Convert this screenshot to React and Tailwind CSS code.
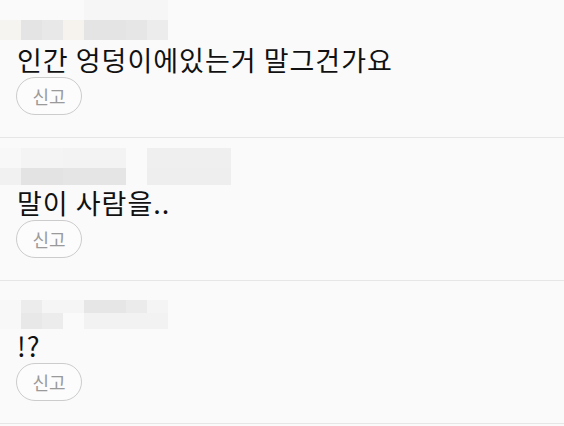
import React from "react";

const fontCls = "font-['Noto_Sans_CJK_KR','Noto_Sans',sans-serif]";

function Item({ mosaic, text, first }) {
  return (
    <div className={"border-b border-[#e6e6e6] " + (first ? "pt-0" : "pt-[10px]")}>
      {mosaic}
      <div className={"pl-[17px] h-[34px] flex items-center text-[27px] leading-[34px] tracking-[1px] text-[#111] " + fontCls}>
        <span className="whitespace-nowrap">{text}</span>
      </div>
      <div className="pl-[16px] pb-[22px]">
        <button
          className={"w-[66px] h-[38px] rounded-full border border-[#cccccc] bg-[#fcfcfc] text-[18px] text-[#9a9a9a] flex items-center justify-center " + fontCls}
        >
          신고
        </button>
      </div>
    </div>
  );
}

export default function App() {
  const m1 = (
    <div className="flex flex-col h-[43px]">
      <div className="flex h-[20px]">
        <div className="w-[84px]" />
        <div className="w-[84px] bg-[#f6f6f6]" />
      </div>
      <div className="flex h-[20px]">
        <div className="w-[21px] bg-[#f6f4f1]" />
        <div className="w-[21px] bg-[#e4e4e4]" />
        <div className="w-[21px] bg-[#e8e8e8]" />
        <div className="w-[21px] bg-[#f6f3ef]" />
        <div className="w-[42px] bg-[#e4e4e4]" />
        <div className="w-[21px] bg-[#e6e6e6]" />
        <div className="w-[21px] bg-[#ececec]" />
      </div>
    </div>
  );
  const m2 = (
    <div className="flex flex-col h-[38px]">
      <div className="flex h-[20px]">
        <div className="w-[21px] bg-[#f8f8f8]" />
        <div className="w-[42px] bg-[#f4f4f4]" />
        <div className="w-[63px] bg-[#f3f3f3]" />
        <div className="w-[21px]" />
        <div className="w-[84px] bg-[#efefef]" />
      </div>
      <div className="flex h-[17px]">
        <div className="w-[21px] bg-[#f1f1f1]" />
        <div className="w-[42px] bg-[#e3e3e3]" />
        <div className="w-[63px] bg-[#e5e5e5]" />
        <div className="w-[21px]" />
        <div className="w-[84px] bg-[#eeeeee]" />
      </div>
    </div>
  );
  const m3 = (
    <div className="flex flex-col h-[38px] pt-[9px]">
      <div className="flex h-[13px]">
        <div className="w-[21px] bg-[#f8f8f8]" />
        <div className="w-[21px] bg-[#ececec]" />
        <div className="w-[42px] bg-[#f5f5f5]" />
        <div className="w-[42px] bg-[#e6e6e6]" />
        <div className="w-[21px] bg-[#ebebeb]" />
        <div className="w-[21px] bg-[#f4f4f4]" />
      </div>
      <div className="flex h-[16px]">
        <div className="w-[21px] bg-[#f8f8f8]" />
        <div className="w-[21px] bg-[#e8e8e8]" />
        <div className="w-[21px] bg-[#ececec]" />
        <div className="w-[21px]" />
        <div className="w-[84px] bg-[#f2f2f2]" />
      </div>
    </div>
  );
  return (
    <div className="w-[564px] h-[426px] overflow-hidden bg-[#fafafa]">
      <Item first mosaic={m1} text="인간 엉덩이에있는거 말그건가요" />
      <Item mosaic={m2} text="말이 사람을.." />
      <Item mosaic={m3} text="!?" />
    </div>
  );
}
